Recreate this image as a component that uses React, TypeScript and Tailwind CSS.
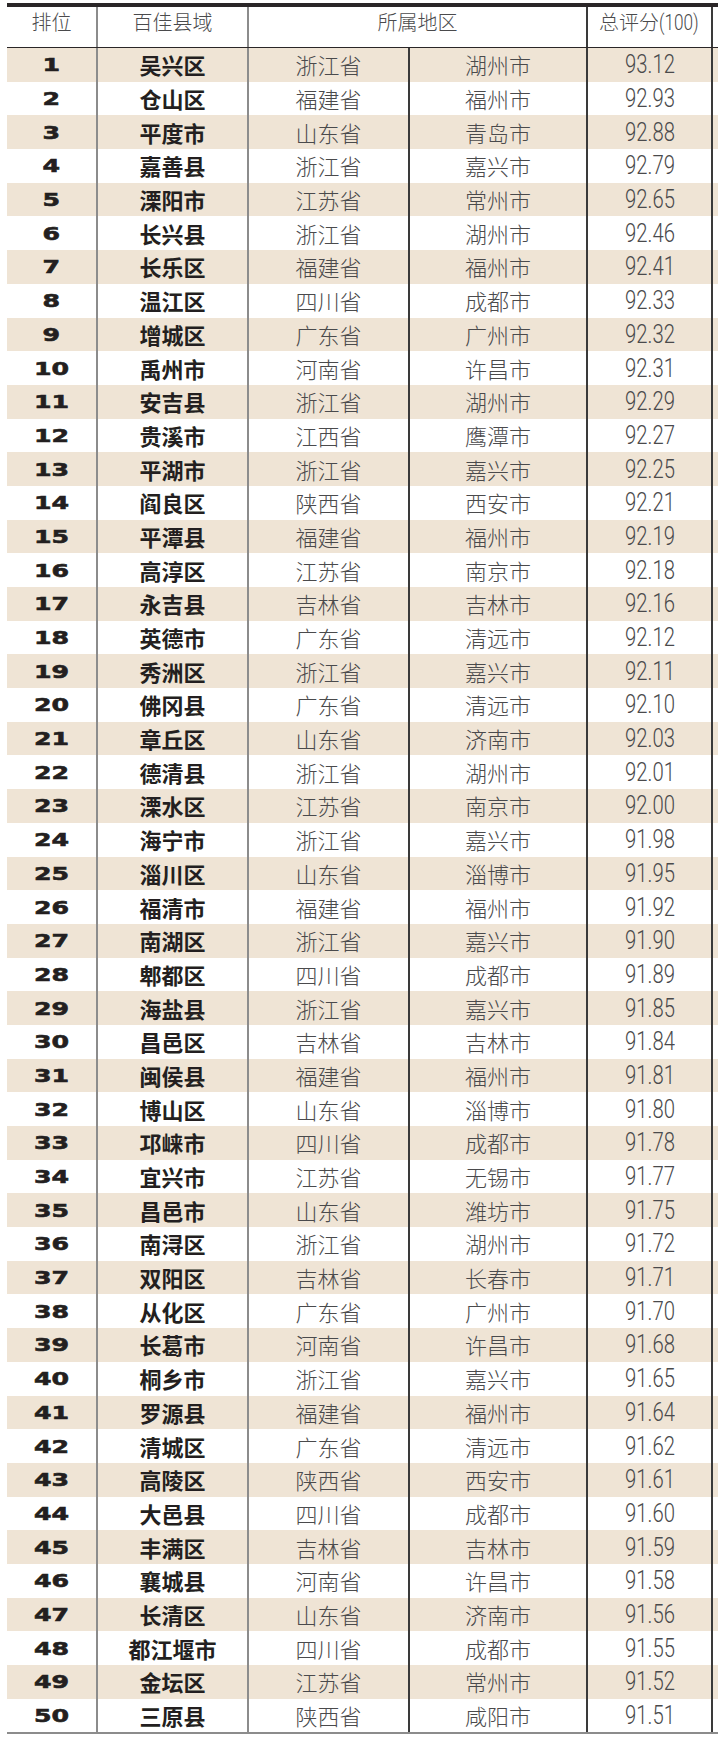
const rows: [string, string, string, string][] = [
  ["吴兴区", "浙江省", "湖州市", "93.12"],
  ["仓山区", "福建省", "福州市", "92.93"],
  ["平度市", "山东省", "青岛市", "92.88"],
  ["嘉善县", "浙江省", "嘉兴市", "92.79"],
  ["溧阳市", "江苏省", "常州市", "92.65"],
  ["长兴县", "浙江省", "湖州市", "92.46"],
  ["长乐区", "福建省", "福州市", "92.41"],
  ["温江区", "四川省", "成都市", "92.33"],
  ["增城区", "广东省", "广州市", "92.32"],
  ["禹州市", "河南省", "许昌市", "92.31"],
  ["安吉县", "浙江省", "湖州市", "92.29"],
  ["贵溪市", "江西省", "鹰潭市", "92.27"],
  ["平湖市", "浙江省", "嘉兴市", "92.25"],
  ["阎良区", "陕西省", "西安市", "92.21"],
  ["平潭县", "福建省", "福州市", "92.19"],
  ["高淳区", "江苏省", "南京市", "92.18"],
  ["永吉县", "吉林省", "吉林市", "92.16"],
  ["英德市", "广东省", "清远市", "92.12"],
  ["秀洲区", "浙江省", "嘉兴市", "92.11"],
  ["佛冈县", "广东省", "清远市", "92.10"],
  ["章丘区", "山东省", "济南市", "92.03"],
  ["德清县", "浙江省", "湖州市", "92.01"],
  ["溧水区", "江苏省", "南京市", "92.00"],
  ["海宁市", "浙江省", "嘉兴市", "91.98"],
  ["淄川区", "山东省", "淄博市", "91.95"],
  ["福清市", "福建省", "福州市", "91.92"],
  ["南湖区", "浙江省", "嘉兴市", "91.90"],
  ["郫都区", "四川省", "成都市", "91.89"],
  ["海盐县", "浙江省", "嘉兴市", "91.85"],
  ["昌邑区", "吉林省", "吉林市", "91.84"],
  ["闽侯县", "福建省", "福州市", "91.81"],
  ["博山区", "山东省", "淄博市", "91.80"],
  ["邛崃市", "四川省", "成都市", "91.78"],
  ["宜兴市", "江苏省", "无锡市", "91.77"],
  ["昌邑市", "山东省", "潍坊市", "91.75"],
  ["南浔区", "浙江省", "湖州市", "91.72"],
  ["双阳区", "吉林省", "长春市", "91.71"],
  ["从化区", "广东省", "广州市", "91.70"],
  ["长葛市", "河南省", "许昌市", "91.68"],
  ["桐乡市", "浙江省", "嘉兴市", "91.65"],
  ["罗源县", "福建省", "福州市", "91.64"],
  ["清城区", "广东省", "清远市", "91.62"],
  ["高陵区", "陕西省", "西安市", "91.61"],
  ["大邑县", "四川省", "成都市", "91.60"],
  ["丰满区", "吉林省", "吉林市", "91.59"],
  ["襄城县", "河南省", "许昌市", "91.58"],
  ["长清区", "山东省", "济南市", "91.56"],
  ["都江堰市", "四川省", "成都市", "91.55"],
  ["金坛区", "江苏省", "常州市", "91.52"],
  ["三原县", "陕西省", "咸阳市", "91.51"],
];

const cjk = "font-['Noto_Sans_CJK_SC','Noto_Sans',sans-serif]";

export default function App() {
  return (
    <div className="w-[718px] h-[1742px] bg-white overflow-hidden pl-[7px] pt-[3px]">
      <div className="w-[711px]">
        {/* top rule */}
        <div className="h-[4px] bg-[#2a2627]" />

        {/* header */}
        <div className={`flex h-[41px] border-b border-[#2a2627] text-[20px] font-light text-[#4a4a4c] ${cjk}`}>
          <div className="w-[91px] border-r-2 border-[#8c8c8c] flex items-center justify-center pb-[10px]">排位</div>
          <div className="w-[151px] border-r-2 border-[#8c8c8c] flex items-center justify-center pb-[10px]">百佳县域</div>
          <div className="w-[339px] border-r-2 border-[#3a3a3a] flex items-center justify-center pb-[10px]">所属地区</div>
          <div className="w-[125px] border-r-2 border-[#3a3a3a] flex items-center justify-center pb-[10px]">
            总评分
            <span className="inline-block font-['Roboto',sans-serif] font-light text-[22px] scale-x-[0.78] origin-left -mr-[10px]">(100)</span>
          </div>
          <div className="flex-1" />
        </div>

        {/* body */}
        <div className="border-b-2 border-[#8c8c8c] w-[713px]">
          {rows.map(([county, prov, city, score], i) => (
            <div key={i} className={`flex h-[33.7px] ${i % 2 === 0 ? "bg-[#efe4d5]" : "bg-white"}`}>
              <div className="w-[91px] border-r-2 border-[#8c8c8c] flex items-center justify-center">
                <span className="inline-block font-['DejaVu_Sans',sans-serif] font-bold text-[18px] text-[#231f20] scale-x-[1.4] [-webkit-text-stroke:0.6px_#231f20]">
                  {i + 1}
                </span>
              </div>
              <div className={`w-[151px] border-r-2 border-[#8c8c8c] flex items-center justify-center text-[22px] font-bold text-[#231f20] ${cjk}`}>
                {county}
              </div>
              <div className={`w-[161px] border-r-2 border-[#3a3a3a] flex items-center justify-center text-[22px] font-light text-[#4a4a4c] ${cjk}`}>
                {prov}
              </div>
              <div className={`w-[178px] border-r-2 border-[#3a3a3a] flex items-center justify-center text-[22px] font-light text-[#4a4a4c] ${cjk}`}>
                {city}
              </div>
              <div className="w-[125px] border-r-2 border-[#3a3a3a] flex items-center justify-center">
                <span className="inline-block font-['Roboto',sans-serif] font-light text-[26px] text-[#4a4a4c] scale-x-[0.78]">
                  {score}
                </span>
              </div>
              <div className="w-[5px]" />
            </div>
          ))}
        </div>
      </div>
    </div>
  );
}
